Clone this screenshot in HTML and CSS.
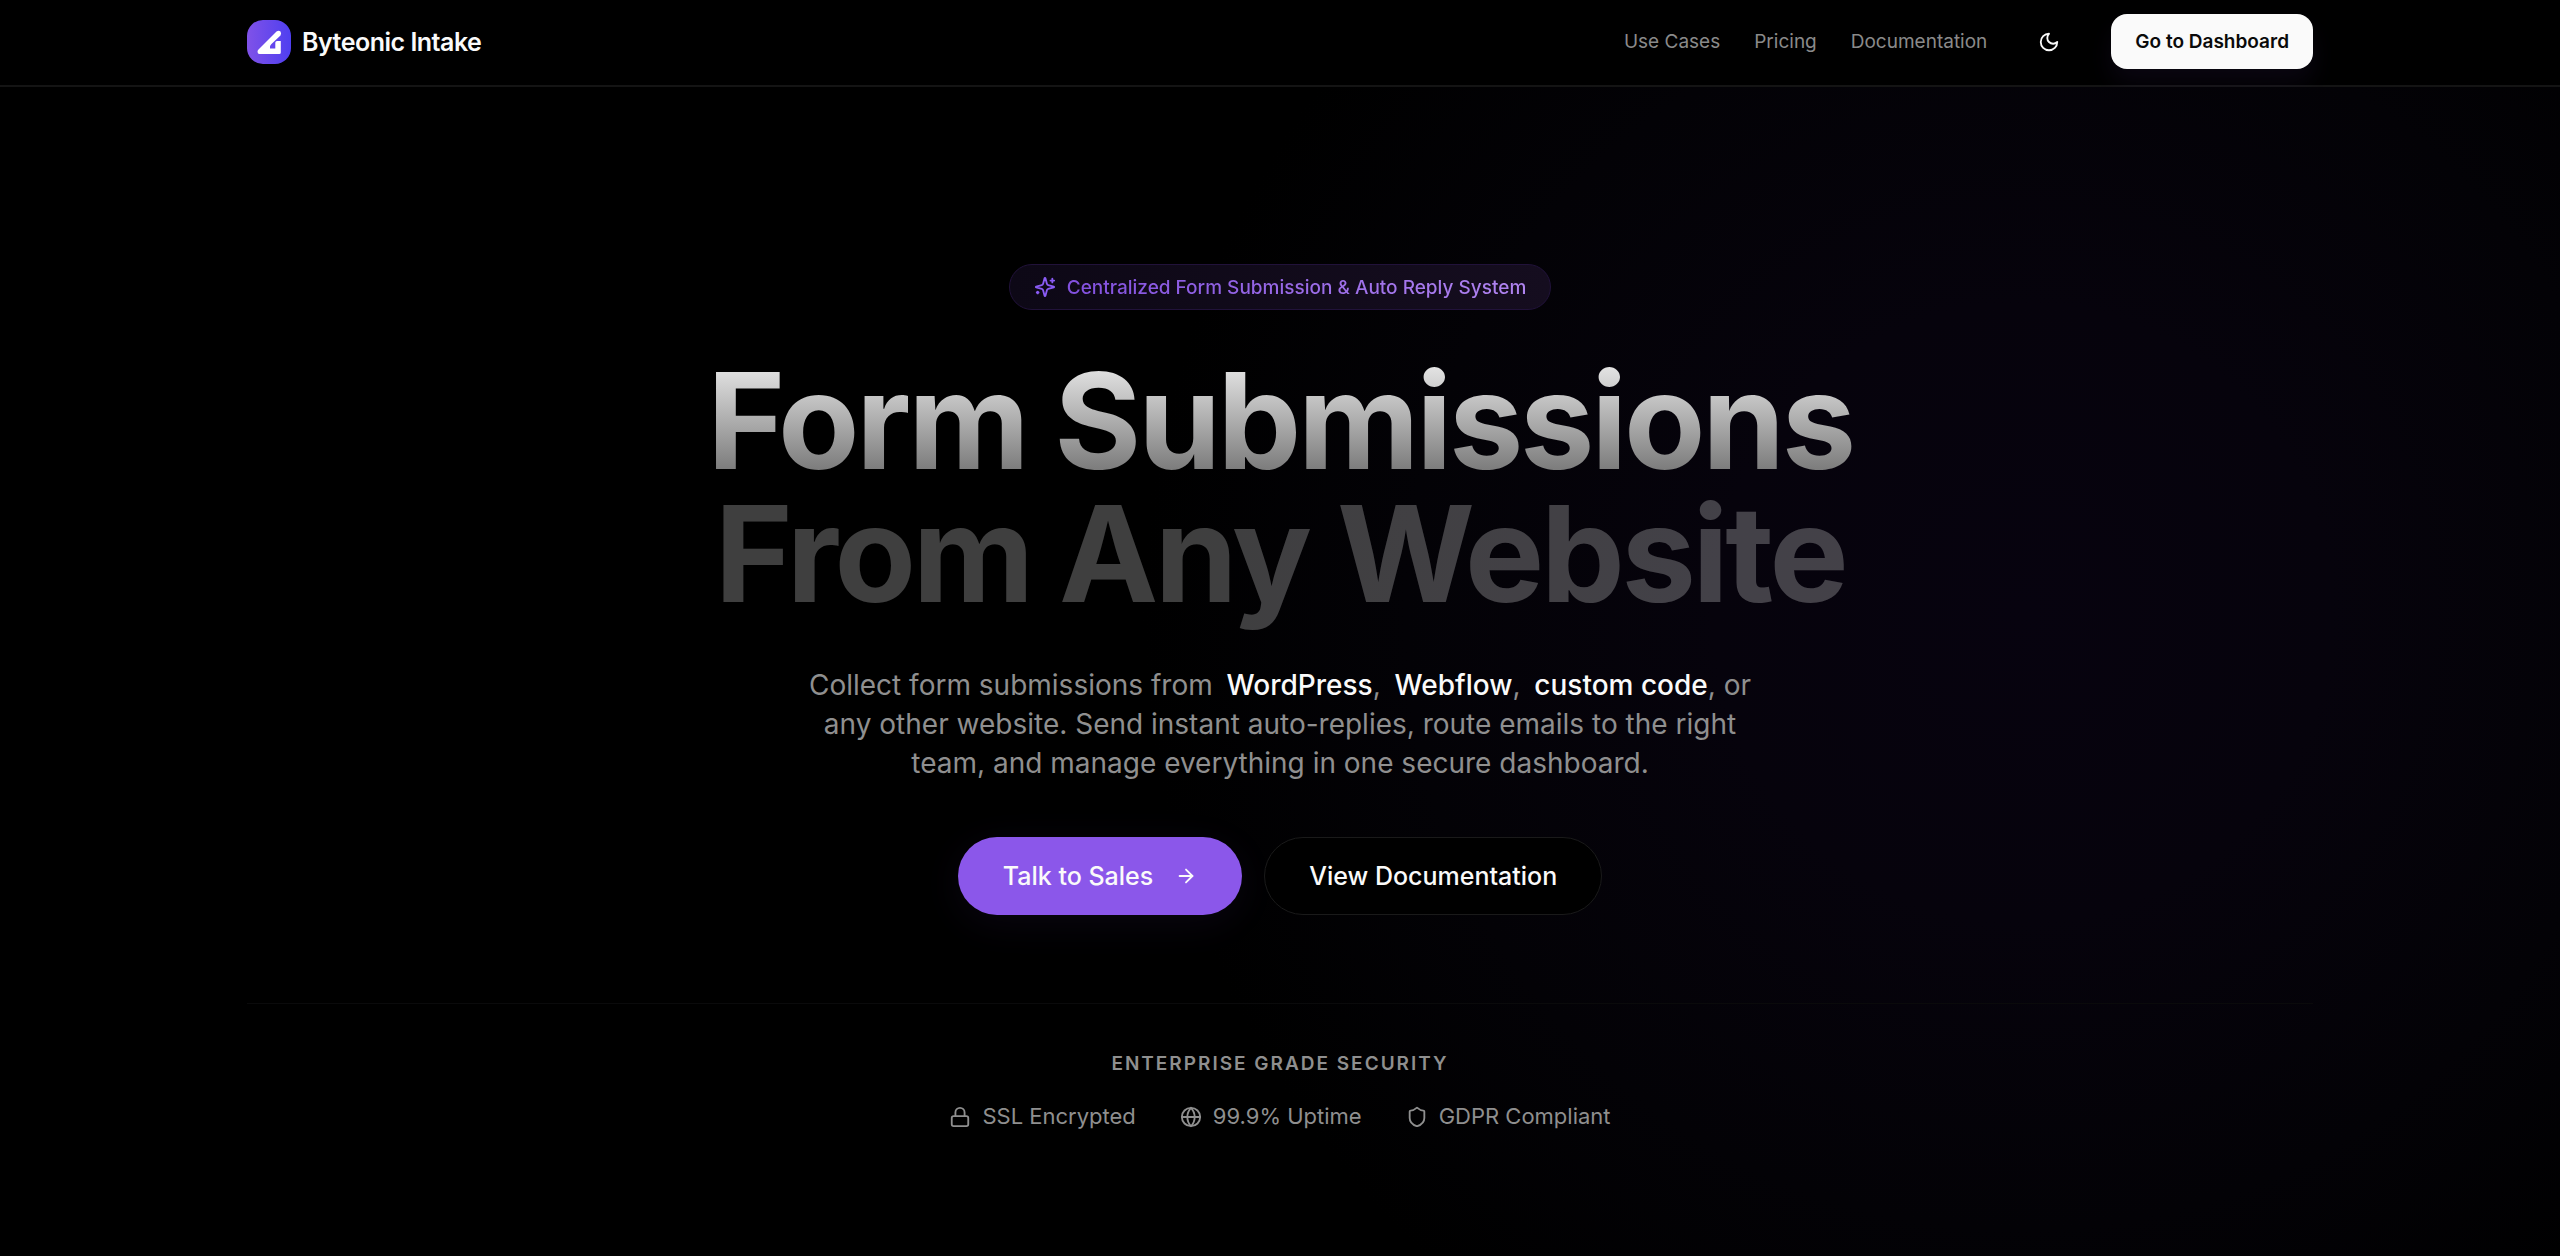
FILE: index.html
```html
<!DOCTYPE html>
<html lang="en">
<head>
  <meta charset="UTF-8">
  <meta name="viewport" content="width=device-width, initial-scale=1.0">
  <title>Byteonic Intake</title>
  <link rel="stylesheet" href="styles.css">
</head>
<body>
  <header class="site-header">
    <div class="container header-inner">
      <a class="brand" href="#">
        <svg class="brand-logo" viewBox="0 0 44 44" aria-hidden="true">
          <defs>
            <linearGradient id="logoFill" x1="0" y1="0" x2="1" y2="0">
              <stop offset="0" stop-color="#8052e8"/>
              <stop offset="1" stop-color="#4f3ff0"/>
            </linearGradient>
          </defs>
          <rect width="44" height="44" rx="16" fill="url(#logoFill)"/>
          <path d="M29.500 11.500 Q31.500 10 33.300 11.200 Q34.800 13 33.500 15.500 L24.200 24.300 Q22 26.500 23 28.500 H28.300 V22.500 Q28.500 21 30 21 H33.800 V32.500 Q33.800 34 32.300 34 H12.500 Q10.500 34 10.500 31.800 Q10.500 30.500 11.500 29.500 Z" fill="#fff"/>
        </svg>
        <span>Byteonic Intake</span>
      </a>
      <nav class="nav">
        <a class="nav-link" href="#">Use Cases</a>
        <a class="nav-link" href="#">Pricing</a>
        <a class="nav-link" href="#">Documentation</a>
        <button class="theme-toggle" type="button" aria-label="Toggle theme">
          <svg class="icon" viewBox="0 0 24 24"><path d="M12 3a6 6 0 0 0 9 9 9 9 0 1 1-9-9Z"/></svg>
        </button>
        <a class="dashboard-btn" href="#">Go to Dashboard</a>
      </nav>
    </div>
  </header>

  <main class="hero">
    <div class="container hero-inner">
      <div class="badge">
        <svg class="icon" viewBox="0 0 24 24"><path d="M9.937 15.500A2 2 0 0 0 8.500 14.063l-6.135-1.582a.5.5 0 0 1 0-.962L8.500 9.936A2 2 0 0 0 9.937 8.500l1.582-6.135a.5.5 0 0 1 .963 0L14.063 8.500A2 2 0 0 0 15.500 9.937l6.135 1.581a.5.5 0 0 1 0 .964L15.500 14.063a2 2 0 0 0-1.437 1.437l-1.582 6.135a.5.5 0 0 1-.963 0z"/><path d="M20 3v4"/><path d="M22 5h-4"/><path d="M4 17v2"/><path d="M5 18H3"/></svg>
        <span class="badge-text">Centralized Form Submission &amp; Auto Reply System</span>
      </div>

      <h1 class="title">
        <span class="title-top">Form Submissions</span>
        <span class="title-bottom">From Any Website</span>
      </h1>

      <p class="lead">
        Collect form submissions from <strong>WordPress</strong>, <strong>Webflow</strong>, <strong>custom code</strong>, or any other website. Send instant auto-replies, route emails to the right team, and manage everything in one secure dashboard.
      </p>

      <div class="actions">
        <a class="btn btn-primary" href="#">
          Talk to Sales
          <svg class="icon" viewBox="0 0 24 24"><path d="M5 12h14"/><path d="m12 5 7 7-7 7"/></svg>
        </a>
        <a class="btn btn-outline" href="#">View Documentation</a>
      </div>

      <section class="trust">
        <h2 class="trust-title">Enterprise Grade Security</h2>
        <ul class="trust-list">
          <li>
            <svg class="icon" viewBox="0 0 24 24"><rect width="18" height="11" x="3" y="11" rx="2"/><path d="M7 11V7a5 5 0 0 1 10 0v4"/></svg>
            SSL Encrypted
          </li>
          <li>
            <svg class="icon" viewBox="0 0 24 24"><circle cx="12" cy="12" r="10"/><path d="M12 2a14.500 14.500 0 0 0 0 20 14.500 14.500 0 0 0 0-20"/><path d="M2 12h20"/></svg>
            99.9% Uptime
          </li>
          <li>
            <svg class="icon" viewBox="0 0 24 24"><path d="M20 13c0 5-3.500 7.500-7.660 8.950a1 1 0 0 1-.67-.01C7.500 20.500 4 18 4 13V6a1 1 0 0 1 1-1c2 0 4.500-1.200 6.240-2.720a1.170 1.170 0 0 1 1.520 0C14.510 3.810 17 5 19 5a1 1 0 0 1 1 1z"/></svg>
            GDPR Compliant
          </li>
        </ul>
      </section>
    </div>
  </main>
</body>
</html>
```
FILE: styles.css
```css
* {
  box-sizing: border-box;
}

body {
  margin: 0;
  min-height: 100vh;
  display: flex;
  flex-direction: column;
  font-family: Inter, sans-serif;
  background: #000;
  color: #fafafa;
}

a {
  color: inherit;
  text-decoration: none;
}

.container {
  width: 100%;
  max-width: 2154px;
  margin: 0 auto;
  padding: 0 44px;
}

.icon {
  width: 22px;
  height: 22px;
  flex: none;
  fill: none;
  stroke: currentColor;
  stroke-width: 2;
  stroke-linecap: round;
  stroke-linejoin: round;
}

/* Header */
.site-header {
  border-bottom: 2px solid #141414;
}

.header-inner {
  display: flex;
  align-items: center;
  justify-content: space-between;
  height: 85px;
  padding-bottom: 2px;
}

.brand {
  display: flex;
  align-items: center;
  gap: 11px;
  font-size: 25px;
  font-weight: 600;
  letter-spacing: -0.02em;
}

.brand-logo {
  width: 44px;
  height: 44px;
}

.nav {
  display: flex;
  align-items: center;
  gap: 34px;
}

.nav-link {
  font-size: 19px;
  color: #8a8a8a;
}

.theme-toggle {
  display: flex;
  align-items: center;
  justify-content: center;
  width: 56px;
  height: 56px;
  padding: 0;
  border: 0;
  background: none;
  color: #fafafa;
}

.dashboard-btn {
  padding: 16px 24px;
  border-radius: 16px;
  background: #fafafa;
  color: #0a0a0a;
  font-size: 19px;
  line-height: 23px;
  font-weight: 600;
  box-shadow: 0 14px 24px rgba(139, 92, 246, 0.07);
}

/* Hero */
.hero {
  flex: 1;
  background: radial-gradient(circle 880px at 79% 45%, #07030f 0%, #06030c 35%, #030206 70%, #000 100%);
}

.hero-inner {
  display: flex;
  flex-direction: column;
  align-items: center;
  padding-top: 177px;
  text-align: center;
}

.badge {
  display: flex;
  align-items: center;
  gap: 11px;
  height: 46px;
  padding: 0 24px;
  border: 1px solid #21123a;
  border-radius: 23px;
  background: linear-gradient(90deg, #0d0816, #150d1f);
  color: #8b5cf6;
  font-size: 19px;
  font-weight: 500;
}

.badge-text {
  background: linear-gradient(90deg, #8250df, #b084f0);
  background-clip: text;
  -webkit-background-clip: text;
  color: transparent;
}

.title {
  margin: 44px 0 46px;
  font-size: 133px;
  line-height: 133px;
  font-weight: 700;
  letter-spacing: -0.025em;
}

.title span {
  display: block;
}

.title-top {
  background: linear-gradient(180deg, #f0f0f0, #6b6b6b);
  background-clip: text;
  -webkit-background-clip: text;
  color: transparent;
}

.title-bottom {
  color: rgba(250, 250, 250, 0.25);
}

.lead {
  max-width: 960px;
  margin: 0 0 54px;
  font-size: 28px;
  line-height: 39px;
  color: #8f8f8f;
}

.lead strong {
  margin-left: 6px;
  color: #fafafa;
  font-weight: 500;
}

.actions {
  display: flex;
  gap: 22px;
}

.btn {
  display: flex;
  align-items: center;
  gap: 22px;
  height: 78px;
  padding: 0 44px;
  border: 1px solid transparent;
  border-radius: 39px;
  font-size: 25px;
  font-weight: 500;
}

.btn-primary {
  background: #8b57ea;
  box-shadow: 0 8px 40px rgba(139, 92, 246, 0.07);
}

.btn-outline {
  border-color: #1a1a1a;
  background: #000;
}

/* Trust row */
.trust {
  width: 100%;
  margin-top: 88px;
  padding-top: 46px;
  border-top: 1px solid #0a0a0b;
  color: #8f8f8f;
}

.trust-title {
  margin: 0 0 22px;
  font-size: 19px;
  line-height: 28px;
  font-weight: 600;
  letter-spacing: 2px;
  text-transform: uppercase;
}

.trust-list {
  display: flex;
  justify-content: center;
  gap: 44px;
  margin: 0;
  padding: 0;
  list-style: none;
  font-size: 22px;
  line-height: 33px;
}

.trust-list li {
  display: flex;
  align-items: center;
  gap: 11px;
}
```
